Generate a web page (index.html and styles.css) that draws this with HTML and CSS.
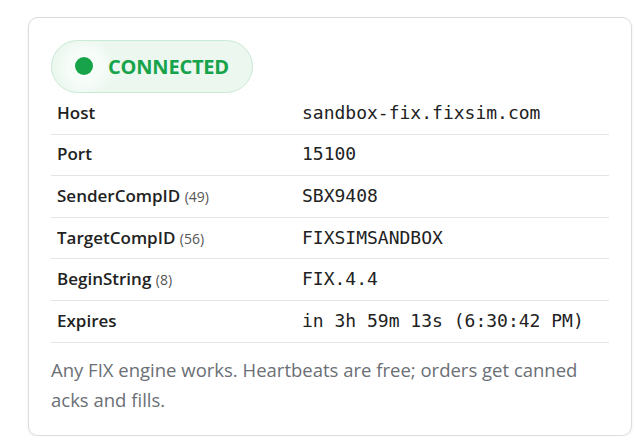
FILE: index.html
```html
<!DOCTYPE html>
<html>
<head>
<meta charset="utf-8">
<link rel="stylesheet" href="styles.css">
</head>
<body>
<div class="card">
  <div class="badge"><span class="dot"></span><span class="badge-text">CONNECTED</span></div>
  <div class="rows">
    <div class="row"><div class="label">Host</div><div class="value">sandbox-fix.fixsim.com</div></div>
    <div class="row"><div class="label">Port</div><div class="value">15100</div></div>
    <div class="row"><div class="label">SenderCompID <span class="tag">(49)</span></div><div class="value">SBX9408</div></div>
    <div class="row"><div class="label">TargetCompID <span class="tag">(56)</span></div><div class="value">FIXSIMSANDBOX</div></div>
    <div class="row"><div class="label">BeginString <span class="tag">(8)</span></div><div class="value">FIX.4.4</div></div>
    <div class="row"><div class="label">Expires</div><div class="value">in 3h 59m 13s (6:30:42 PM)</div></div>
  </div>
  <p class="note">Any FIX engine works. Heartbeats are free; orders get canned acks and fills.</p>
</div>
</body>
</html>
```
FILE: styles.css
```css
html, body {
  margin: 0;
  padding: 0;
  background: #ffffff;
}
body {
  padding: 17px 3px 0 28px;
  font-family: "Open Sans", "Noto Sans", sans-serif;
}
.card {
  width: 558px;
  border: 1px solid #dcdcdc;
  border-radius: 10px;
  padding: 22px 22px 20px 22px;
  box-shadow: 0 1px 3px rgba(0,0,0,0.08);
}
.badge {
  display: inline-flex;
  align-items: center;
  height: 51px;
  width: 200px;
  box-sizing: content-box;
  border: 1px solid #c9ead5;
  border-radius: 27px;
  background: radial-gradient(circle at 33px 26px, #f6fcf8 0, #f6fcf8 18px, #ebf7ef 30px);
}
.dot {
  width: 18px;
  height: 18px;
  border-radius: 50%;
  background: #16a34a;
  margin-left: 23px;
  margin-right: 15px;
  margin-top: -1px;
}
.badge-text {
  font-size: 20px;
  font-weight: 700;
  color: #16a34a;
  letter-spacing: -0.2px;
  margin-top: -1px;
}
.rows {
  display: flex;
  flex-direction: column;
}
.row {
  display: grid;
  grid-template-columns: 245px 1fr;
  height: 40.6px;
  align-items: center;
  border-bottom: 1px solid #e4e4e4;
}
.label {
  padding-left: 6px;
  font-size: 17px;
  font-weight: 600;
  color: #222222;
  margin-top: -2px;
}
.tag {
  font-size: 14px;
  font-weight: 400;
  color: #555555;
}
.value {
  padding-left: 6px;
  font-family: "DejaVu Sans Mono", "Liberation Mono", monospace;
  font-size: 18px;
  color: #222222;
  margin-top: -2px;
}
.note {
  margin: 12px 0 0 0;
  padding-right: 20px;
  font-size: 18.5px;
  line-height: 30px;
  color: #6b6f76;
}
```
